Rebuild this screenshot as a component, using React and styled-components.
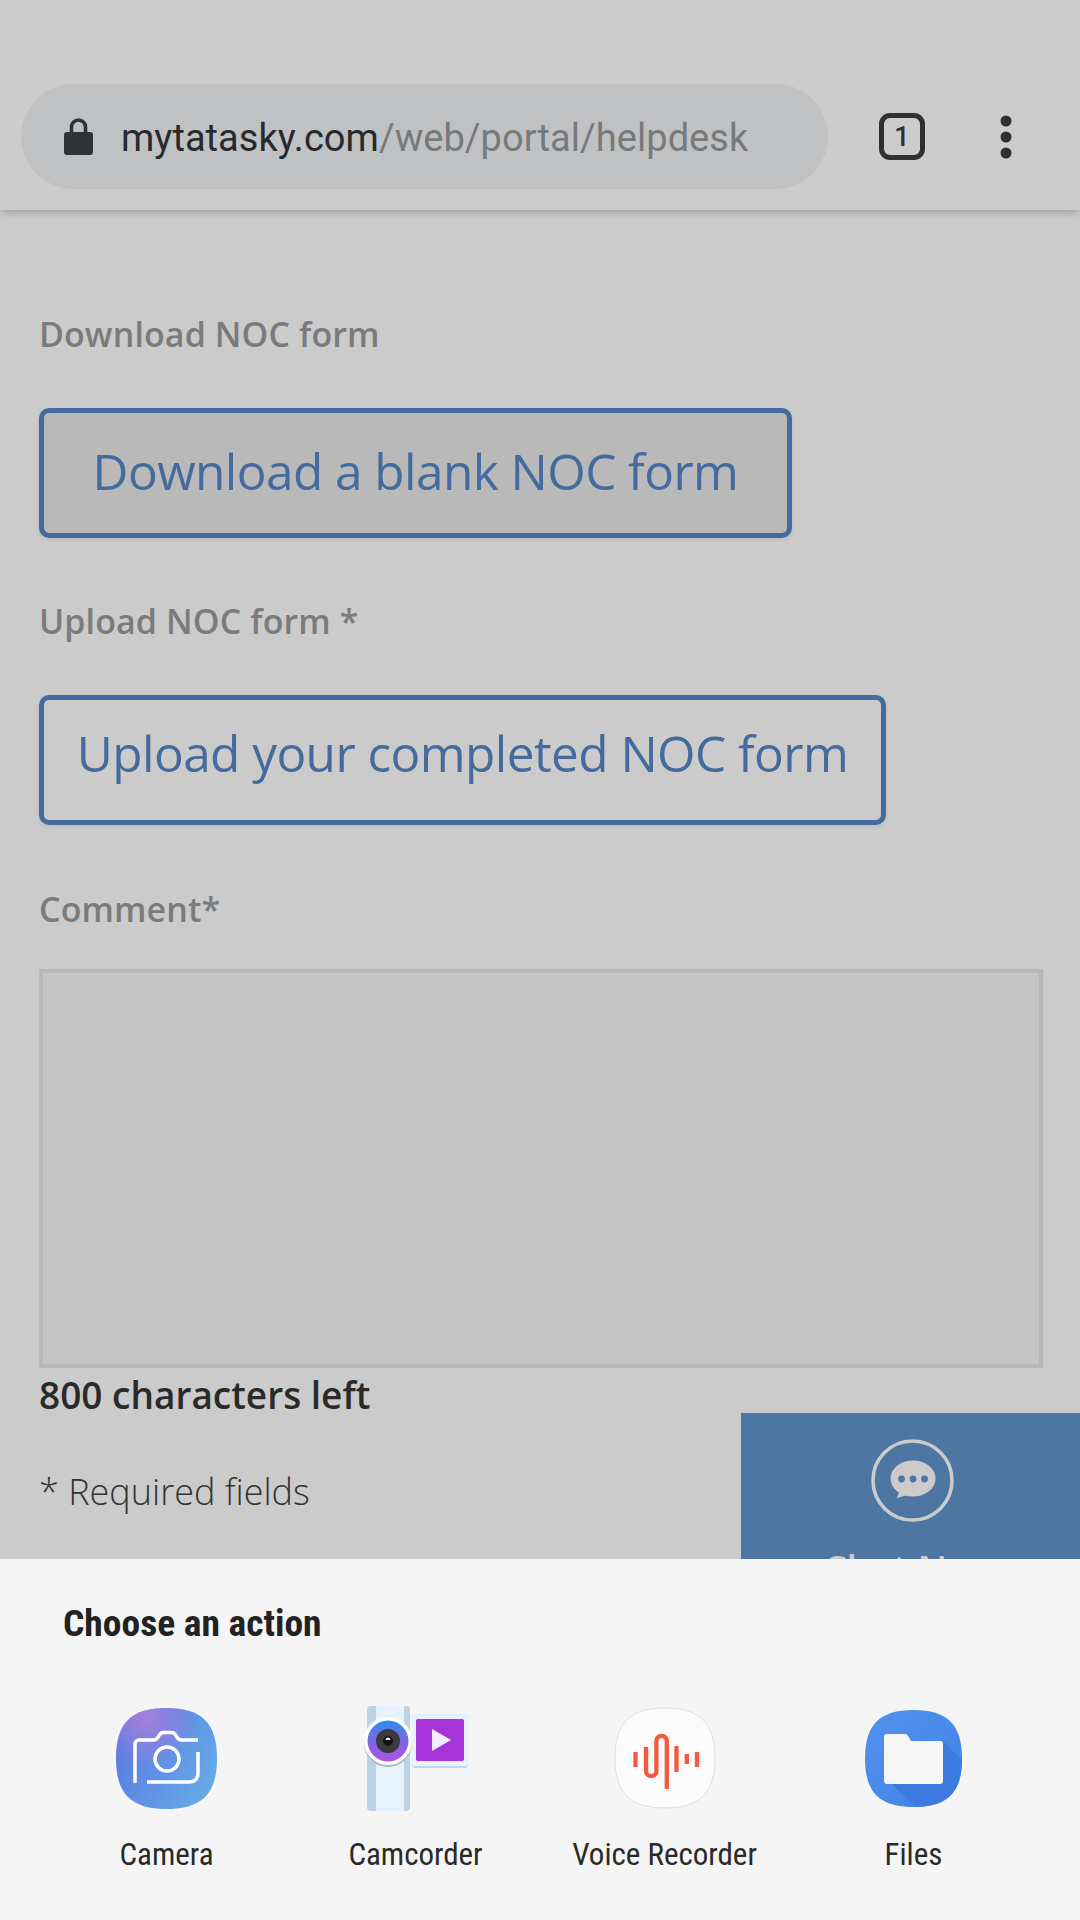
import React from "react";
import styled, { createGlobalStyle } from "styled-components";

const Global = createGlobalStyle`
  html, body { margin: 0; padding: 0; background: #cbcbcb; }
  * { box-sizing: border-box; }
`;
const Page = styled.div`
  width: 1080px; height: 1920px; display: flex; flex-direction: column; overflow: hidden;
  background: #cbcbcb; font-family: "Open Sans", sans-serif;
`;
const Toolbar = styled.header`
  height: 210px; flex: none; padding: 84px 0 21px 21px; display: flex; align-items: center;
  background: #cccccc; box-shadow: 0 3px 8px rgba(0,0,0,.2); position: relative; z-index: 2;
`;
const UrlPill = styled.div`
  width: 807px; height: 105px; border-radius: 53px; background: #c0c1c3; display: flex; align-items: center;
  padding-left: 43px; gap: 28px;
`;
const UrlText = styled.span`
  font-family: Roboto, sans-serif; font-size: 38px; line-height: 44px; padding-top: 2px; color: #77797b; white-space: nowrap; letter-spacing: 0.05px;
  & b { font-weight: 400; color: #27292b; }
`;
const TabCount = styled.div`
  width: 46px; height: 47px; margin-left: 51px; border: 5px solid #2e3133; border-radius: 11px; display: flex;
  align-items: center; justify-content: center; font: 500 27px Roboto, sans-serif; color: #2e3133;
`;
const MenuDots = styled.svg`
  margin-left: 74px; flex: none;
`;
const Main = styled.main`
  flex: 1; min-height: 0; position: relative; overflow: hidden; padding: 104px 37px 0 39px;
`;
const Label = styled.div`
  font-size: 34px; line-height: 40px; font-weight: 600; color: #7b7b7b; letter-spacing: 0.1px; margin-top: ${p => p.$top}px;
`;
const FormButton = styled.div`
  height: 130px; width: ${p => p.$width}px; margin-top: 54px; border: 5px solid #446b9d; border-radius: 10px;
  background: ${p => p.$fill}; display: flex; align-items: center; justify-content: center;
  padding-bottom: ${p => p.$lift}px;
  color: #446b9d; font-size: 49.500px; font-weight: 400; letter-spacing: -0.55px; white-space: nowrap;
  box-shadow: 0 2px 4px rgba(0,0,0,.08);
`;
const CommentBox = styled.div`
  height: 399px; margin-top: 40px; background: #c5c5c5; border: 4px solid #b8b8b8;
`;
const Counter = styled.div`
  margin-top: 7px; font-size: 37px; line-height: 40px; font-weight: 600; color: #2a2a2a;
`;
const Required = styled.div`
  margin-top: 57px; font-size: 36px; line-height: 40px; font-weight: 300; color: #333;
`;
const ChatBox = styled.aside`
  position: absolute; right: 0; top: 1203px; width: 339px; height: 220px; background: #4d76a3; padding: 26px 0 0 3px;
  display: flex; flex-direction: column; align-items: center; gap: 26px; color: #cbcbcb;
`;
const ChatLabel = styled.div`
  font-size: 38px; line-height: 40px; font-weight: 600;
`;
const Sheet = styled.section`
  height: 361px; flex: none; background: #f5f5f5; padding: 42px 42px 0; position: relative; z-index: 3;
`;
const SheetTitle = styled.h2`
  margin: 0 0 0 21px; font: 700 37.500px/44px Roboto, sans-serif; font-stretch: 75%; color: #222;
`;
const Grid = styled.div`
  margin-top: 58px; display: grid; grid-template-columns: repeat(4, 249px);
`;
const Tile = styled.div`
  display: flex; flex-direction: column; align-items: center;
`;
const IconSlot = styled.div`
  height: 110px; display: flex; align-items: center; justify-content: center;
`;
const TileLabel = styled.div`
  margin-top: 22px; font: 400 31px/40px Roboto, sans-serif; font-stretch: 75%; color: #2a2a2a; white-space: nowrap;
`;

const SQ = "M50 0C85 0 100 15 100 50C100 85 85 100 50 100C15 100 0 85 0 50C0 15 15 0 50 0Z";

const LockIcon = () => (
  <svg width="29" height="37" viewBox="0 0 29 37" style={{ flex: "none" }}>
    <path d="M7.500 15V9a7 7 0 0 1 14 0v6" fill="none" stroke="#2e3336" strokeWidth="3.600" />
    <rect x="0" y="14" width="29" height="23" rx="3" fill="#2e3336" />
  </svg>
);

const ChatIcon = () => (
  <svg width="83" height="83" viewBox="0 0 83 83" style={{ flex: "none" }}>
    <circle cx="41.500" cy="41.500" r="39.500" fill="none" stroke="#cbcbcb" strokeWidth="3.600" />
    <ellipse cx="42" cy="39.500" rx="22.500" ry="18" fill="#cbcbcb" />
    <path d="M29 51L26 59L40 55Z" fill="#cbcbcb" />
    <circle cx="30.500" cy="40" r="3.400" fill="#4d76a3" />
    <circle cx="42" cy="40" r="3.400" fill="#4d76a3" />
    <circle cx="53.500" cy="40" r="3.400" fill="#4d76a3" />
  </svg>
);

const CameraIcon = () => (
  <svg width="101" height="101" viewBox="0 0 101 101">
    <defs>
      <radialGradient id="camA" cx="0.3" cy="0.1" r="0.5">
        <stop offset="0" stopColor="#a77fdc" />
        <stop offset="1" stopColor="#a77fdc" stopOpacity="0" />
      </radialGradient>
      <linearGradient id="camB" x1="0" y1="0.25" x2="1" y2="0.8">
        <stop offset="0.1" stopColor="#5a7de2" />
        <stop offset="0.9" stopColor="#66a8e6" />
      </linearGradient>
    </defs>
    <g transform="scale(1.01)">
      <path d={SQ} fill="url(#camB)" />
      <path d={SQ} fill="url(#camA)" />
    </g>
    <path d="M19 75V36a4 4 0 0 1 4-4H37Q41 32 43 27.500Q44.500 24.500 48 24.500H55Q58.500 24.500 60 27.500Q62 32 66 32H82" fill="none" stroke="#fff" strokeWidth="3.500" />
    <path d="M31 74H74a8 8 0 0 0 8-8V44" fill="none" stroke="#fff" strokeWidth="3.500" />
    <circle cx="51" cy="51" r="12" fill="none" stroke="#fff" strokeWidth="3.500" />
  </svg>
);

const CamcorderIcon = () => (
  <svg width="110" height="110" viewBox="0 0 110 110">
    <defs>
      <linearGradient id="lens" x1="0" y1="0" x2="0" y2="1">
        <stop offset="0" stopColor="#2a8ff0" />
        <stop offset="0.5" stopColor="#7a68e0" />
        <stop offset="1" stopColor="#b150e8" />
      </linearGradient>
    </defs>
    <rect x="6" y="3" width="43" height="105" rx="4" fill="#bcd3e6" />
    <rect x="15" y="3" width="28" height="105" fill="#e6f2fd" />
    <rect x="51" y="11" width="56" height="54" rx="3" fill="#c3d6e6" />
    <rect x="51" y="11" width="56" height="52" rx="3" fill="#e6f2fd" />
    <rect x="55" y="16" width="48" height="42" rx="2" fill="#a634d8" />
    <path d="M71 26L90 37L71 48Z" fill="#f4ecfb" />
    <circle cx="27" cy="40" r="24" fill="#a9b8c6" />
    <circle cx="27" cy="38" r="24" fill="#fff" />
    <circle cx="27" cy="38" r="20.500" fill="url(#lens)" />
    <circle cx="27" cy="38" r="12" fill="#3a3a3e" />
    <circle cx="27" cy="38" r="5" fill="#111" />
    <path d="M24.500 37a2.500 2.500 0 0 1 5 0Z" fill="#f2f2f2" />
  </svg>
);

const RecorderIcon = () => (
  <svg width="102" height="102" viewBox="-1 -1 102 102">
    <path d={SQ} fill="#fbfbfb" stroke="#dfdfdf" strokeWidth="1" />
    <g fill="none" stroke="#f4583f" strokeWidth="4.300">
      <path d="M20.500 44V59" />
      <path d="M31 39V63a5.200 5.200 0 0 0 10.400 0V33a5.200 5.200 0 0 1 10.400 0V81" />
      <path d="M61.500 38V64" />
      <path d="M71.800 46V56" />
      <path d="M82 44V59" />
    </g>
  </svg>
);

const FilesIcon = () => (
  <svg width="97" height="97" viewBox="0 0 97 97">
    <defs>
      <linearGradient id="fil" x1="0" y1="0" x2="1" y2="1">
        <stop offset="0" stopColor="#5293ee" />
        <stop offset="1" stopColor="#3f80e6" />
      </linearGradient>
      <clipPath id="filc"><path d={SQ} transform="scale(.97)" /></clipPath>
    </defs>
    <path d={SQ} transform="scale(.97)" fill="url(#fil)" />
    <g clipPath="url(#filc)">
      <path d="M19 66L50 97H97V50L78 31Z" fill="#3d7be0" />
    </g>
    <path d="M19 27a3 3 0 0 1 3-3H40Q42 24 43 26L46 31H75a3 3 0 0 1 3 3V71a3 3 0 0 1-3 3H22a3 3 0 0 1-3-3Z" fill="#f6f6f6" />
  </svg>
);

const actions = [
  { name: "Camera", Icon: CameraIcon },
  { name: "Camcorder", Icon: CamcorderIcon },
  { name: "Voice Recorder", Icon: RecorderIcon },
  { name: "Files", Icon: FilesIcon },
];

export default function App() {
  return (
    <Page>
      <Global />
      <Toolbar>
        <UrlPill>
          <LockIcon />
          <UrlText><b>mytatasky.com</b>/web/portal/helpdesk</UrlText>
        </UrlPill>
        <TabCount>1</TabCount>
        <MenuDots width="14" height="44" viewBox="0 0 14 44">
          <ellipse cx="7" cy="6" rx="5.500" ry="5.500" fill="#2e3133" />
          <ellipse cx="7" cy="22" rx="5.500" ry="5.500" fill="#2e3133" />
          <ellipse cx="7" cy="38" rx="5.500" ry="5.500" fill="#2e3133" />
        </MenuDots>
      </Toolbar>
      <Main>
        <Label $top={0}>Download NOC form</Label>
        <FormButton $width={753} $fill="#b9b9b9" $lift={4}>Download a blank NOC form</FormButton>
        <Label $top={63}>Upload NOC form *</Label>
        <FormButton $width={847} $fill="transparent" $lift={14}>Upload your completed NOC form</FormButton>
        <Label $top={64}>Comment*</Label>
        <CommentBox />
        <Counter>800 characters left</Counter>
        <Required>* Required fields</Required>
        <ChatBox>
          <ChatIcon />
          <ChatLabel>Chat Now</ChatLabel>
        </ChatBox>
      </Main>
      <Sheet>
        <SheetTitle>Choose an action</SheetTitle>
        <Grid>
          {actions.map(({ name, Icon }) => (
            <Tile key={name}>
              <IconSlot><Icon /></IconSlot>
              <TileLabel>{name}</TileLabel>
            </Tile>
          ))}
        </Grid>
      </Sheet>
    </Page>
  );
}
